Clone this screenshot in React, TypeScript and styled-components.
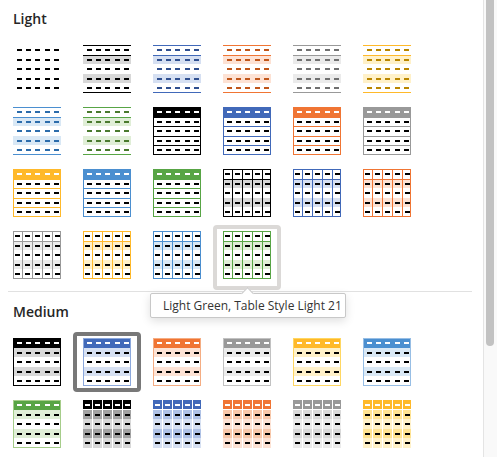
import React from 'react';
import styled, { createGlobalStyle, css } from 'styled-components';

const GlobalStyle = createGlobalStyle`
  html, body {
    margin: 0;
    padding: 0;
    background: #ffffff;
  }
  body {
    font-family: "Open Sans", "Noto Sans", "Liberation Sans", sans-serif;
    color: #262626;
  }
`;

type Tone = { main: string; dash: string; tint: string; mid: string; edge: string };
type Kind = 'plain' | 'lines' | 'boxed' | 'grid' | 'medium' | 'tiles';
type Swatch = { kind: Kind; tone: string; state?: 'hover' | 'selected' };

const tones: Record<string, Tone> = {
  black: { main: '#000000', dash: '#000000', tint: '#d8d8d8', mid: '#a3a3a3', edge: '#000000' },
  blue: { main: '#4169b9', dash: '#2f4f8f', tint: '#d6e0f2', mid: '#afc2e6', edge: '#8ca8dc' },
  orange: { main: '#f07534', dash: '#c0561a', tint: '#fde2d4', mid: '#f8c8aa', edge: '#f5ad83' },
  gray: { main: '#999999', dash: '#707070', tint: '#ebebeb', mid: '#d9d9d9', edge: '#c2c2c2' },
  gold: { main: '#ffb92a', dash: '#b98600', tint: '#fff1c9', mid: '#ffe392', edge: '#ffd762' },
  sky: { main: '#4b8fd0', dash: '#2c6cab', tint: '#d9e8f5', mid: '#bad4ee', edge: '#97bee5' },
  green: { main: '#58a545', dash: '#4a7a2e', tint: '#e0eed7', mid: '#c4dfb0', edge: '#a6cd8a' },
};

const lightStyles: Swatch[] = [
  { kind: 'plain', tone: 'black' },
  { kind: 'lines', tone: 'black' },
  { kind: 'lines', tone: 'blue' },
  { kind: 'lines', tone: 'orange' },
  { kind: 'lines', tone: 'gray' },
  { kind: 'lines', tone: 'gold' },
  { kind: 'lines', tone: 'sky' },
  { kind: 'lines', tone: 'green' },
  { kind: 'boxed', tone: 'black' },
  { kind: 'boxed', tone: 'blue' },
  { kind: 'boxed', tone: 'orange' },
  { kind: 'boxed', tone: 'gray' },
  { kind: 'boxed', tone: 'gold' },
  { kind: 'boxed', tone: 'sky' },
  { kind: 'boxed', tone: 'green' },
  { kind: 'grid', tone: 'black' },
  { kind: 'grid', tone: 'blue' },
  { kind: 'grid', tone: 'orange' },
  { kind: 'grid', tone: 'gray' },
  { kind: 'grid', tone: 'gold' },
  { kind: 'grid', tone: 'sky' },
  { kind: 'grid', tone: 'green', state: 'hover' },
];

const mediumStyles: Swatch[] = [
  { kind: 'medium', tone: 'black' },
  { kind: 'medium', tone: 'blue', state: 'selected' },
  { kind: 'medium', tone: 'orange' },
  { kind: 'medium', tone: 'gray' },
  { kind: 'medium', tone: 'gold' },
  { kind: 'medium', tone: 'sky' },
  { kind: 'medium', tone: 'green' },
  { kind: 'tiles', tone: 'black' },
  { kind: 'tiles', tone: 'blue' },
  { kind: 'tiles', tone: 'orange' },
  { kind: 'tiles', tone: 'gray' },
  { kind: 'tiles', tone: 'gold' },
];

// row boundaries inside a 48px thumbnail
const B = [0, 10, 19, 29, 38, 48];
const COLS = [0, 10, 20, 30, 40];
const DASH_X = [4, 13, 22, 32, 41];
const mid = (k: number) => Math.round((B[k] + B[k + 1]) / 2);

const RowDashes = ({ k, color }: { k: number; color: string }) => (
  <>
    {DASH_X.map((x) => (
      <rect key={x} x={x} y={mid(k) - 1} width={5} height={2} fill={color} />
    ))}
  </>
);

const CellDashes = ({ k, color }: { k: number; color: string }) => (
  <>
    {COLS.map((x) => (
      <rect key={x} x={x + 2} y={mid(k) - 1} width={5} height={2} fill={color} />
    ))}
  </>
);

const band = (k: number, fill: string) => (
  <rect key={'b' + k} x={0} y={B[k]} width={48} height={B[k + 1] - B[k]} fill={fill} />
);

const Frame = ({ color }: { color: string }) => (
  <rect x={0.5} y={0.5} width={47} height={47} fill="none" stroke={color} strokeWidth={1} />
);

const TableThumb = ({ kind, tone }: { kind: Kind; tone: string }) => {
  const t = tones[tone];
  const rows = [0, 1, 2, 3, 4];
  let body: React.ReactNode = null;

  if (kind === 'plain') {
    body = rows.map((k) => <RowDashes key={k} k={k} color="#000" />);
  }

  if (kind === 'lines') {
    body = (
      <>
        {band(1, t.tint)}
        {band(3, t.tint)}
        <rect x={0} y={0} width={48} height={1} fill={t.main} />
        <rect x={0} y={B[1]} width={48} height={1} fill={t.main} />
        <rect x={0} y={47} width={48} height={1} fill={t.main} />
        {rows.map((k) => <RowDashes key={k} k={k} color={t.dash} />)}
      </>
    );
  }

  if (kind === 'boxed') {
    body = (
      <>
        {band(0, t.main)}
        {[1, 2, 3, 4].map((k) => (
          <rect key={k} x={0} y={B[k]} width={48} height={1} fill={t.main} />
        ))}
        <Frame color={t.main} />
        <RowDashes k={0} color="#fff" />
        {[1, 2, 3, 4].map((k) => <RowDashes key={k} k={k} color="#000" />)}
      </>
    );
  }

  if (kind === 'grid') {
    body = (
      <>
        {band(1, t.tint)}
        {band(3, t.tint)}
        {[1, 2, 3, 4].map((c) => (
          <rect key={c} x={COLS[c] - 1} y={0} width={1} height={48} fill={t.main} />
        ))}
        <rect x={0} y={B[1]} width={48} height={1} fill={t.main} />
        <Frame color={t.main} />
        {rows.map((k) => <CellDashes key={k} k={k} color="#000" />)}
      </>
    );
  }

  if (kind === 'medium') {
    body = (
      <>
        {band(0, t.main)}
        {band(1, t.tint)}
        {band(3, t.tint)}
        <Frame color={t.edge} />
        <RowDashes k={0} color="#fff" />
        {[1, 2, 3, 4].map((k) => <RowDashes key={k} k={k} color="#000" />)}
      </>
    );
  }

  if (kind === 'tiles') {
    const fills = [t.main, t.mid, t.tint, t.mid, t.tint];
    body = (
      <>
        {COLS.map((x) => (
          <g key={x}>
            <rect x={x} y={0} width={x === 40 ? 8 : 9} height={9} fill={fills[0]} />
            {[1, 2, 3, 4].map((k) => (
              <rect key={k} x={x} y={B[k]} width={x === 40 ? 8 : 9} height={B[k + 1] - B[k]} fill={fills[k]} />
            ))}
          </g>
        ))}
        {COLS.map((x) => (
          <rect key={'h' + x} x={x + 2} y={4} width={5} height={2} fill="#fff" />
        ))}
        {[1, 2, 3, 4].map((k) => <CellDashes key={k} k={k} color="#000" />)}
      </>
    );
  }

  return (
    <svg width={48} height={48} viewBox="0 0 48 48" shapeRendering="crispEdges">
      {body}
    </svg>
  );
};

const Window = styled.div`
  display: flex;
  width: 497px;
  height: 457px;
  overflow: hidden;
  background: #ffffff;
`;

const Pane = styled.div`
  position: relative;
  flex: 1;
  padding-top: 9px;
  overflow: hidden;
`;

const SectionTitle = styled.div`
  padding: 0 13px;
  font-size: 14px;
  font-weight: 600;
  line-height: 20px;
  color: #262626;
`;

const Gallery = styled.div`
  display: grid;
  grid-template-columns: repeat(6, 68px);
  grid-auto-rows: 60px;
  gap: 2px;
  margin-top: 10px;
  padding-left: 3px;
`;

const Cell = styled.div<{ $state?: 'hover' | 'selected' }>`
  position: relative;
  display: flex;
  align-items: center;
  justify-content: center;
  box-sizing: border-box;
  width: 68px;
  height: 60px;

  ${(p) =>
    p.$state === 'selected' &&
    css`
      &::after {
        content: '';
        position: absolute;
        inset: 0;
        border: 4px solid #787878;
        border-radius: 4px;
      }
    `}

  ${(p) =>
    p.$state === 'hover' &&
    css`
      &::after {
        content: '';
        position: absolute;
        inset: 0 0 -5px 0;
        border: 4px solid #dbd9d7;
        border-radius: 4px;
      }
    `}
`;

const Divider = styled.div`
  height: 1px;
  margin: 6px 11px 10px 8px;
  background: #e1e1e1;
`;

const Tooltip = styled.div`
  position: absolute;
  left: 150px;
  top: 293px;
  box-sizing: border-box;
  width: 196px;
  height: 25px;
  padding: 0 12px;
  border: 1px solid #c8c8c8;
  border-radius: 2px;
  background: #ffffff;
  box-shadow: 0 3px 10px rgba(0, 0, 0, 0.13);
  font-size: 12px;
  line-height: 23px;
  color: #333333;
  white-space: nowrap;

  &::before {
    content: '';
    position: absolute;
    left: 92px;
    top: -5px;
    width: 8px;
    height: 8px;
    background: #ffffff;
    border-top: 1px solid #c8c8c8;
    border-left: 1px solid #c8c8c8;
    transform: rotate(45deg);
  }
`;

const ScrollTrack = styled.div`
  width: 13px;
  border-left: 1px solid #e4e4e4;
  background: #f9f9f9;
`;

const ScrollThumb = styled.div`
  height: 346px;
  margin: 0 3px 0 2px;
  border-radius: 0 0 4px 4px;
  background: #c2c2c2;
`;

const Section = ({ title, items }: { title: string; items: Swatch[] }) => (
  <>
    <SectionTitle>{title}</SectionTitle>
    <Gallery>
      {items.map((s, i) => (
        <Cell key={i} $state={s.state}>
          <TableThumb kind={s.kind} tone={s.tone} />
        </Cell>
      ))}
    </Gallery>
  </>
);

export default function App() {
  return (
    <>
      <GlobalStyle />
      <Window>
        <Pane>
          <Section title="Light" items={lightStyles} />
          <Divider />
          <Section title="Medium" items={mediumStyles} />
          <Tooltip>Light Green, Table Style Light 21</Tooltip>
        </Pane>
        <ScrollTrack>
          <ScrollThumb />
        </ScrollTrack>
      </Window>
    </>
  );
}
